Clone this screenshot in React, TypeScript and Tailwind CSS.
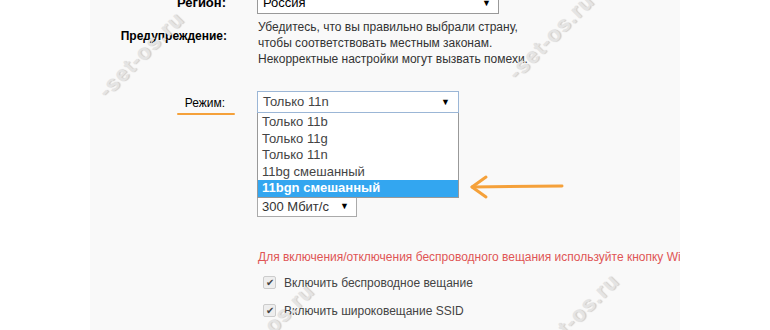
import * as React from "react"

const modes = ["Только 11b", "Только 11g", "Только 11n", "11bg смешанный", "11bgn смешанный"]

function Caret() {
  return <span className="text-[9px] leading-none text-black">▼</span>
}

function Watermark({ className }: { className: string }) {
  return (
    <div
      className={
        "pointer-events-none absolute -rotate-45 select-none text-[22px] font-bold tracking-wider text-[#e4e4e4] " +
        className
      }
      style={{ textShadow: "1px 1px 1px rgba(0,0,0,0.18)" }}
    >
      -set-os.ru
    </div>
  )
}

export default function App() {
  return (
    <div
      className="relative h-[330px] w-[770px] overflow-hidden bg-white text-[12px] text-[#333]"
      style={{ fontFamily: '"Liberation Sans", Arial, sans-serif' }}
    >
      <div className="ml-[90px] h-full w-[590px] overflow-hidden bg-[#f9f9f9]">
        <div className="-mt-[8px] flex flex-col">
          {/* Регион */}
          <div className="flex items-center">
            <div className="w-[137px] pr-[1px] text-right text-[13px] font-bold text-black">Регион:</div>
            <div className="ml-[30px] flex h-[22px] w-[242px] items-center justify-between border border-[#999] bg-white pl-[5px] pr-[7px] text-[13px] text-black">
              <span>Россия</span>
              <Caret />
            </div>
          </div>

          {/* Предупреждение */}
          <div className="mt-[5px] flex">
            <div className="w-[137px] pt-[8px] text-right text-[12px] font-bold text-black">Предупреждение:</div>
            <div className="ml-[31px] leading-[16px] text-[#333]">
              <div>Убедитесь, что вы правильно выбрали страну,</div>
              <div>чтобы соответствовать местным законам.</div>
              <div>Некорректные настройки могут вызвать помехи.</div>
            </div>
          </div>

          {/* Режим */}
          <div className="mt-[24px] flex">
            <div className="flex w-[137px] flex-col items-end pt-[3px]">
              <div className="pr-[2px] text-[12px] text-black">Режим:</div>
              <div className="mr-[-8px] mt-[1px] h-[2px] w-[58px] rounded-full bg-[#f5a13a]" />
            </div>
            <div className="ml-[30px] flex flex-col">
              <div className="flex h-[22px] w-[202px] items-center justify-between border border-[#9bb6d6] bg-white pl-[5px] pr-[8px] text-[13px] text-[#444]">
                <span>Только 11n</span>
                <Caret />
              </div>
              <div className="w-[202px] border-x border-b border-[#999] bg-white pt-[1px] text-[13px] leading-[16.6px] text-[#444]">
                {modes.map((m, i) => (
                  <div
                    key={m}
                    className={
                      i === modes.length - 1
                        ? "bg-[#33a6f0] pl-[4px] font-bold text-white"
                        : "pl-[4px]"
                    }
                  >
                    {m}
                  </div>
                ))}
              </div>
              <div className="flex h-[19px] w-[100px] items-center justify-between border-x border-b border-[#aaa] bg-white pl-[4px] pr-[7px] text-[13px] text-[#333]">
                <span>300 Мбит/с</span>
                <Caret />
              </div>
            </div>
          </div>

          {/* Red note */}
          <div className="ml-[168px] mt-[31px] whitespace-nowrap text-[12px] text-[#e05555]">
            Для включения/отключения беспроводного вещания используйте кнопку Wi-Fi
          </div>

          {/* Checkboxes */}
          {["Включить беспроводное вещание", "Включить широковещание SSID", "Включить WDS"].map((t, i) => (
            <div
              key={t}
              className={"ml-[173px] flex items-center gap-[8px] " + (i === 0 ? "mt-[8px]" : "mt-[10px]")}
            >
              <span className="flex h-[13px] w-[13px] items-center justify-center rounded-[2px] border border-[#ccc] bg-[#eee] text-[10px] leading-none text-[#444]">
                ✔
              </span>
              <span className="text-[12px] text-[#444]">{t}</span>
            </div>
          ))}
        </div>
      </div>

      {/* Orange arrow */}
      <svg className="absolute left-[468px] top-[174px]" width="96" height="26" viewBox="0 0 96 26">
        <path d="M94 12 L4 13" stroke="#f5a13a" strokeWidth="3" strokeLinecap="round" fill="none" />
        <path d="M18 3 L4 13 L18 23" stroke="#f5a13a" strokeWidth="3" strokeLinecap="round" strokeLinejoin="round" fill="none" />
      </svg>

      <Watermark className="left-[85px] top-[38px]" />
      <Watermark className="left-[495px] top-[20px]" />
      <Watermark className="left-[520px] top-[300px]" />
      <Watermark className="left-[215px] top-[310px]" />
    </div>
  )
}
